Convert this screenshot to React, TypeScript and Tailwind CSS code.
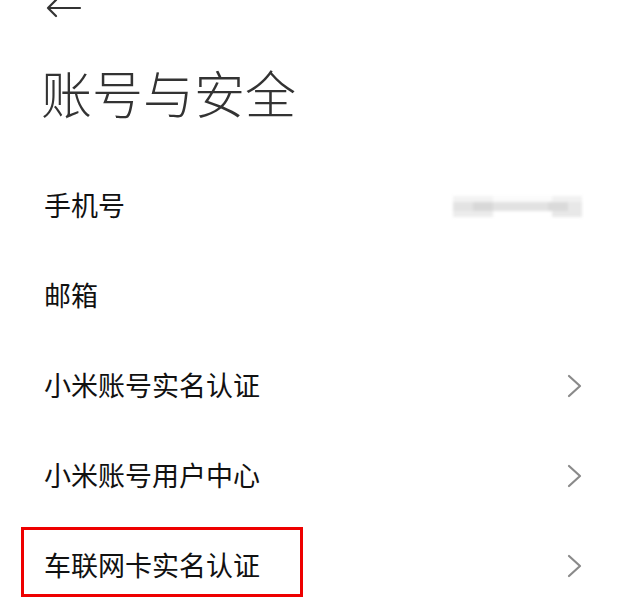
import React from 'react';

const font = { fontFamily: '"Noto Sans CJK SC", "Noto Sans", sans-serif' };

function Chevron() {
    return (
        <svg width="15" height="24" viewBox="0 0 15 24" fill="none" className="shrink-0">
            <polyline points="2,2 13,12 2,22" stroke="#8a8a8a" strokeWidth="2.2" strokeLinecap="round" strokeLinejoin="round" />
        </svg>
    );
}

function BlurredPhone() {
    return (
        <div className="w-[129px] h-[21px] flex flex-col blur-[1.5px]">
            <div className="h-[6px] flex">
                <div className="w-[40px] bg-[#f3f3f3]" />
                <div className="flex-1 bg-[#fbfbfb]" />
                <div className="w-[30px] bg-[#f1f1f1]" />
            </div>
            <div className="h-[9px] flex">
                <div className="w-[20px] bg-[#e3e3e3]" />
                <div className="w-[20px] bg-[#d8d8d8]" />
                <div className="flex-1 bg-[#e2e2e2]" />
                <div className="w-[20px] bg-[#dadada]" />
                <div className="w-[14px] bg-[#e8e8e8]" />
            </div>
            <div className="h-[6px] flex">
                <div className="w-[40px] bg-[#ececec]" />
                <div className="flex-1 bg-white" />
                <div className="w-[30px] bg-[#e8e8e8]" />
            </div>
        </div>
    );
}

function Row({ label, chevron, right, boxed }: { label: string; chevron?: boolean; right?: React.ReactNode; boxed?: boolean }) {
    return (
        <div className="relative h-[90px] flex items-center justify-between pl-[44px] pr-[36px]">
            <span className="text-[27px] leading-[30px] text-[#111] -mt-[3px]">{label}</span>
            {right}
            {chevron && <Chevron />}
            {boxed && (
                <div className="absolute left-[21px] top-[6px] w-[282px] h-[70px] border-[3px] border-[#ee0000]" />
            )}
        </div>
    );
}

export default function App() {
    return (
        <div className="w-[618px] h-[612px] bg-white overflow-hidden" style={font}>
            <div className="h-[18px] pl-[46px]">
                <svg width="36" height="18" viewBox="0 0 36 18" fill="none">
                    <path d="M2 8 H34 M10 0 L2 8 L10 16" stroke="#333" strokeWidth="2.2" strokeLinecap="round" strokeLinejoin="round" />
                </svg>
            </div>

            <h1 className="mt-[49px] pl-[41px] text-[51px] leading-[51px] font-light text-[#333]">账号与安全</h1>

            <div className="mt-[43px]">
                <Row label="手机号" right={<BlurredPhone />} />
                <Row label="邮箱" />
                <Row label="小米账号实名认证" chevron />
                <Row label="小米账号用户中心" chevron />
                <Row label="车联网卡实名认证" chevron boxed />
            </div>
        </div>
    );
}
